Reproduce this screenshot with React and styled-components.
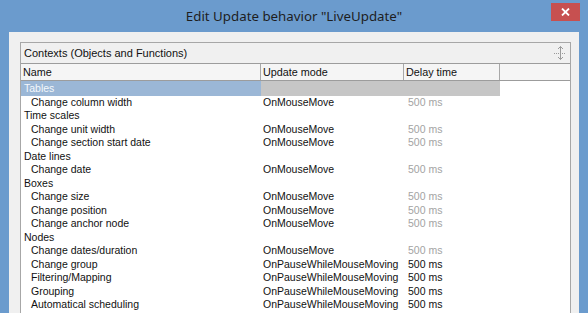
import React from "react";
import styled, { createGlobalStyle } from "styled-components";

const Global = createGlobalStyle`
  html, body { margin: 0; padding: 0; background: #6b9bcd; }
  body { font-family: "Liberation Sans", Arial, sans-serif; }
`;

const Window = styled.div`
  width: 588px;
  height: 313px;
  background: #6b9bcd;
  display: flex;
  flex-direction: column;
  overflow: hidden;
`;

const TitleBar = styled.div`
  height: 32px;
  flex: none;
  display: grid;
  grid-template-columns: 1fr auto 1fr;
  align-items: center;
`;

const Title = styled.div`
  grid-column: 2;
  font-family: "Noto Sans", "Open Sans", sans-serif;
  font-size: 13.3px;
  color: #1e1e1e;
  padding-top: 0px;
`;

const CloseButton = styled.div`
  grid-column: 3;
  justify-self: end;
  align-self: start;
  margin-top: 3px;
  margin-right: 8px;
  width: 29px;
  height: 18px;
  background: #c75050;
  display: flex;
  align-items: center;
  justify-content: center;
`;

const Client = styled.div`
  flex: 1;
  margin: 0 9px;
  background: #f0f0f0;
  padding: 10px 8px 0 11px;
  display: flex;
  flex-direction: column;
  min-height: 0;
`;

const Panel = styled.div`
  flex: 1;
  border: 1px solid #a7a7a7;
  border-bottom: none;
  background: #fff;
  display: flex;
  flex-direction: column;
  min-height: 0;
`;

const PanelHeader = styled.div`
  height: 20px;
  background: #f0f0f0;
  border-bottom: 1px solid #9c9c9c;
  display: flex;
  align-items: center;
  justify-content: space-between;
  padding: 0 4px 0 3px;
  font-size: 11px;
  color: #111;
`;

const cols = "240px 143px 96px 1fr";

const HeaderRow = styled.div`
  display: grid;
  grid-template-columns: ${cols};
  height: 16px;
  border-bottom: 1px solid #9c9c9c;
  background: #f5f5f5;
`;

const HeaderCell = styled.div`
  border-right: ${(p) => (p.$last ? "none" : "1px solid #a8a8a8")};
  padding-left: 2px;
  font-size: 10.8px;
  line-height: 16px;
  color: #111;
  white-space: nowrap;
  overflow: hidden;
`;

const Row = styled.div`
  display: grid;
  grid-template-columns: ${cols};
  height: 13.5px;
  font-size: 10.5px;
  line-height: 14.5px;
  white-space: nowrap;
`;

const NameCell = styled.div`
  padding-left: ${(p) => (p.$group ? "3px" : "10px")};
  background: ${(p) => (p.$selected ? "#9bb7d6" : "transparent")};
  color: ${(p) => (p.$selected ? "#f4f7fb" : "#111")};
`;

const ModeCell = styled.div`
  padding-left: 2px;
  background: ${(p) => (p.$selected ? "#c6c6c6" : "transparent")};
  color: #111;
`;

const DelayCell = styled.div`
  padding-left: 4px;
  background: ${(p) => (p.$selected ? "#c6c6c6" : "transparent")};
  color: ${(p) => (p.$dim ? "#a3a3a3" : "#111")};
`;

const Blank = styled.div``;

const rows = [
  { name: "Tables", group: true, selected: true },
  { name: "Change column width", mode: "OnMouseMove", dim: true },
  { name: "Time scales", group: true },
  { name: "Change unit width", mode: "OnMouseMove", dim: true },
  { name: "Change section start date", mode: "OnMouseMove", dim: true },
  { name: "Date lines", group: true },
  { name: "Change date", mode: "OnMouseMove", dim: true },
  { name: "Boxes", group: true },
  { name: "Change size", mode: "OnMouseMove", dim: true },
  { name: "Change position", mode: "OnMouseMove", dim: true },
  { name: "Change anchor node", mode: "OnMouseMove", dim: true },
  { name: "Nodes", group: true },
  { name: "Change dates/duration", mode: "OnMouseMove", dim: true },
  { name: "Change group", mode: "OnPauseWhileMouseMoving" },
  { name: "Filtering/Mapping", mode: "OnPauseWhileMouseMoving" },
  { name: "Grouping", mode: "OnPauseWhileMouseMoving" },
  { name: "Automatical scheduling", mode: "OnPauseWhileMouseMoving" },
];

const ResizeIcon = () => (
  <svg width="12" height="16" viewBox="0 0 12 16">
    <g stroke="#9a9a9a" strokeWidth="1" fill="none">
      <line x1="6.5" y1="1.5" x2="6.5" y2="14.5" />
      <polyline points="4,4 6.5,1.5 9,4" />
      <polyline points="4,12 6.5,14.5 9,12" />
      <line x1="0" y1="8.5" x2="12" y2="8.5" strokeDasharray="1 1" />
    </g>
  </svg>
);

export default function App() {
  return (
    <Window>
      <Global />
      <TitleBar>
        <Title>Edit Update behavior "LiveUpdate"</Title>
        <CloseButton>
          <svg width="9" height="8" viewBox="0 0 9 8">
            <path d="M1 0.5 L8 7.5 M8 0.5 L1 7.5" stroke="#fff" strokeWidth="1.8" />
          </svg>
        </CloseButton>
      </TitleBar>
      <Client>
        <Panel>
          <PanelHeader>
            <span>Contexts (Objects and Functions)</span>
            <ResizeIcon />
          </PanelHeader>
          <HeaderRow>
            <HeaderCell>Name</HeaderCell>
            <HeaderCell>Update mode</HeaderCell>
            <HeaderCell>Delay time</HeaderCell>
            <HeaderCell $last />
          </HeaderRow>
          {rows.map((r) => (
            <Row key={r.name}>
              <NameCell $group={r.group} $selected={r.selected}>
                {r.name}
              </NameCell>
              <ModeCell $selected={r.selected}>{r.mode || ""}</ModeCell>
              <DelayCell $selected={r.selected} $dim={r.dim}>
                {r.mode ? "500 ms" : ""}
              </DelayCell>
              <Blank />
            </Row>
          ))}
        </Panel>
      </Client>
    </Window>
  );
}
